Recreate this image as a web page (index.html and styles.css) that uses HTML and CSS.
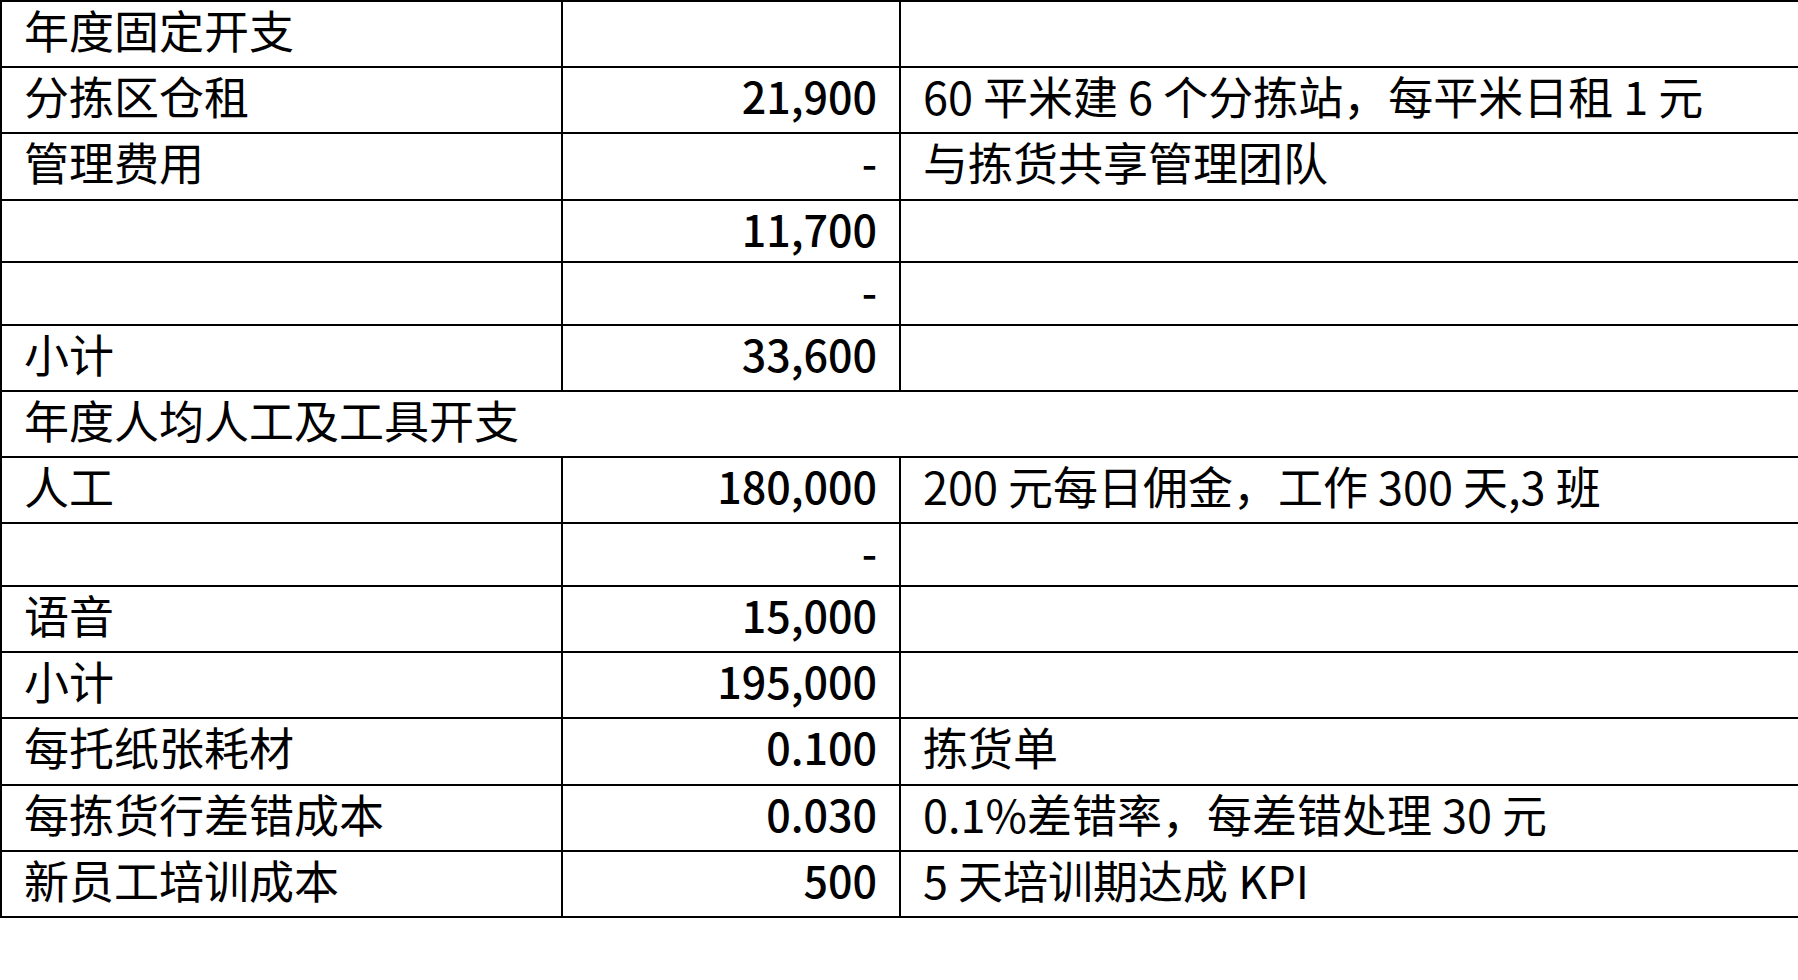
FILE: index.html
```html
<!DOCTYPE html>
<html lang="zh-CN">
<head>
<meta charset="utf-8">
<title>成本表</title>
<link rel="stylesheet" href="styles.css">
</head>
<body>
<div class="sheet">
  <div class="row h66"><div class="cell label">年度固定开支</div><div class="cell num"></div><div class="cell note"></div></div>
  <div class="row h66"><div class="cell label">分拣区仓租</div><div class="cell num">21,900</div><div class="cell note">60 平米建 6 个分拣站，每平米日租 1 元</div></div>
  <div class="row h67"><div class="cell label">管理费用</div><div class="cell num">-</div><div class="cell note">与拣货共享管理团队</div></div>
  <div class="row h62"><div class="cell label"></div><div class="cell num">11,700</div><div class="cell note"></div></div>
  <div class="row h63"><div class="cell label"></div><div class="cell num">-</div><div class="cell note"></div></div>
  <div class="row h66"><div class="cell label">小计</div><div class="cell num">33,600</div><div class="cell note"></div></div>
  <div class="row h66 merged"><div class="cell label span">年度人均人工及工具开支</div></div>
  <div class="row h66"><div class="cell label">人工</div><div class="cell num">180,000</div><div class="cell note">200 元每日佣金，工作 300 天,3 班</div></div>
  <div class="row h63"><div class="cell label"></div><div class="cell num">-</div><div class="cell note"></div></div>
  <div class="row h66"><div class="cell label">语音</div><div class="cell num">15,000</div><div class="cell note"></div></div>
  <div class="row h66"><div class="cell label">小计</div><div class="cell num">195,000</div><div class="cell note"></div></div>
  <div class="row h67"><div class="cell label">每托纸张耗材</div><div class="cell num">0.100</div><div class="cell note">拣货单</div></div>
  <div class="row h66"><div class="cell label">每拣货行差错成本</div><div class="cell num">0.030</div><div class="cell note">0.1%差错率，每差错处理 30 元</div></div>
  <div class="row h66"><div class="cell label">新员工培训成本</div><div class="cell num">500</div><div class="cell note">5 天培训期达成 KPI</div></div>
</div>
</body>
</html>
```

FILE: styles.css
```css
html, body {
  margin: 0;
  padding: 0;
  background: #ffffff;
  overflow: hidden;
}

body {
  font-family: "Noto Sans CJK SC", "Noto Sans", sans-serif;
  font-size: 45px;
  line-height: 51px;
  color: #000000;
}

.sheet {
  width: 1798px;
  border-top: 2px solid #000;
  border-left: 2px solid #000;
  box-sizing: border-box;
}

.row {
  display: grid;
  grid-template-columns: 561px 338px 1fr;
  border-bottom: 2px solid #000;
  box-sizing: border-box;
}

.h62 { height: 62px; }
.h63 { height: 63px; }
.h66 { height: 66px; }
.h67 { height: 67px; }

.cell {
  box-sizing: border-box;
  white-space: nowrap;
  padding-top: 2px;
}

.label {
  border-right: 2px solid #000;
  padding-left: 22px;
}

.num {
  border-right: 2px solid #000;
  text-align: right;
  padding-right: 22px;
  font-size: 43px;
  font-weight: 500;
}

.note {
  padding-left: 22px;
}

.merged .span {
  grid-column: 1 / -1;
  border-right: none;
}
```
